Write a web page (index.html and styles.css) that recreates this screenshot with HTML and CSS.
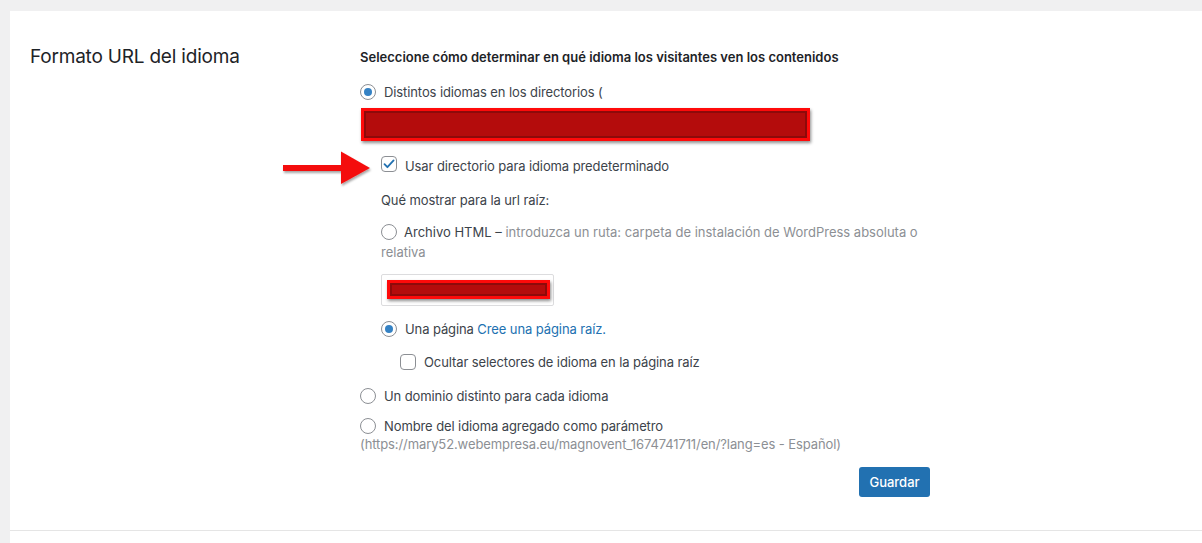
FILE: index.html
```html
<!DOCTYPE html>
<html lang="es">
<head>
    <meta charset="UTF-8">
    <meta name="viewport" content="width=device-width, initial-scale=1.0">
    <title>Formato URL del idioma</title>
    <link rel="stylesheet" href="styles.css">
</head>
<body>
    <div class="card">
        <div class="card-row">
            <h2 class="card-title">Formato URL del idioma</h2>

            <div class="settings">
                <p class="settings-heading">Seleccione cómo determinar en qué idioma los visitantes ven los contenidos</p>

                <label class="option">
                    <span class="radio checked"></span>
                    Distintos idiomas en los directorios (
                </label>
                <div class="redacted redacted-wide"></div>

                <div class="sub-options">
                    <label class="option option-check">
                        <span class="check checked">
                            <svg width="12" height="10" viewBox="0 0 12 10"><path d="M1.5 5.2 L4.4 8.2 L10.6 1.4" fill="none" stroke="#2271b1" stroke-width="1.8" stroke-linecap="round" stroke-linejoin="round"/></svg>
                        </span>
                        Usar directorio para idioma predeterminado
                    </label>

                    <!-- flecha de anotación -->
                    <svg class="arrow" width="94" height="38" viewBox="0 0 94 38">
                        <defs>
                            <filter id="sombra" x="-10%" y="-20%" width="130%" height="150%">
                                <feDropShadow dx="1" dy="2" stdDeviation="1.2" flood-color="#000" flood-opacity="0.35"/>
                            </filter>
                        </defs>
                        <path d="M2 15 H60 V1.5 L89 18 L60 34 V21 H2 Z" fill="#f40f0f" filter="url(#sombra)"/>
                    </svg>

                    <p class="sub-label">Qué mostrar para la url raíz:</p>

                    <p class="option-text"><span class="radio"></span><span class="dark">Archivo HTML –&nbsp;</span><span class="muted">introduzca un ruta: carpeta de instalación de WordPress absoluta o</span><br><span class="muted">relativa</span></p>

                    <div class="path-input">
                        <div class="redacted redacted-small"></div>
                    </div>

                    <label class="option option-page">
                        <span class="radio checked"></span>
                        Una página <a href="#" class="link">Cree una página raíz.</a>
                    </label>

                    <label class="option option-nested">
                        <span class="check"></span>
                        Ocultar selectores de idioma en la página raíz
                    </label>
                </div>

                <label class="option option-domain">
                    <span class="radio"></span>
                    Un dominio distinto para cada idioma
                </label>

                <label class="option option-param">
                    <span class="radio"></span>
                    Nombre del idioma agregado como parámetro
                </label>
                <p class="hint">(https://mary52.webempresa.eu/magnovent_1674741711/en/?lang=es - Español)</p>

                <div class="actions">
                    <button type="button" class="button-primary">Guardar</button>
                </div>
            </div>
        </div>
    </div>
</body>
</html>
```

FILE: styles.css
```css
* {
    margin: 0;
    padding: 0;
    box-sizing: border-box;
}

html,
body {
    height: 100%;
    overflow: hidden;
}

body {
    background-color: #f0f0f1;
    font-family: Inter, "Open Sans", sans-serif;
    font-size: 13px;
    color: #3c434a;
    line-height: 20px;
    letter-spacing: -0.1px;
    padding: 11px 0 0 10px;
}

.card {
    background: #fff;
    height: 100%;
}

.card-row {
    display: grid;
    grid-template-columns: 330px 570px;
    padding: 0 0 32px 20px;
    height: 520px;
    border-bottom: 1px solid #e5e5e5;
}

.card-title {
    font-size: 19px;
    font-weight: 400;
    color: #1d2327;
    line-height: 26px;
    padding-top: 33px;
    letter-spacing: -0.2px;
}

.settings {
    padding-top: 36px;
}

.settings-heading {
    font-weight: 600;
    color: #1d2327;
    letter-spacing: 0;
    margin-bottom: 15px;
}

/* Opciones */
.option,
.option-text {
    display: block;
    position: relative;
    padding-left: 24px;
}

.option-text {
    padding-left: 0;
    letter-spacing: 0;
}

.option-text .radio {
    display: inline-block;
    vertical-align: -3px;
    margin-right: 7px;
}

.dark {
    color: #3c434a;
}

.muted {
    color: #8c8f94;
}

.radio,
.check {
    width: 16px;
    height: 16px;
    border: 1px solid #8c8f94;
    background: #fff;
    display: inline-block;
}

.option > .radio,
.option > .check {
    position: absolute;
    left: 0;
    top: 2px;
}

.radio {
    border-radius: 50%;
}

.radio.checked::after {
    content: "";
    display: block;
    width: 8px;
    height: 8px;
    border-radius: 50%;
    background: #3582c4;
    margin: 3px;
}

.check {
    border-radius: 4px;
}

.check svg {
    display: block;
    margin: 2px 0 0 1px;
}

/* Bloques tachados */
.redacted {
    background: #b40c0c;
    border: 3px solid #ff0a0a;
    box-shadow: inset 0 0 0 2px #8e0a0a, 1px 2px 3px rgba(0, 0, 0, 0.45);
}

.redacted-wide {
    width: 449px;
    height: 33px;
    margin: 6px 0 0 1px;
}

.redacted-small {
    width: 163px;
    height: 19px;
}

.sub-options {
    position: relative;
    padding-left: 21px;
    margin-top: 15px;
}

.option-check > .check {
    top: 0;
}

.arrow {
    position: absolute;
    left: -79px;
    top: -6px;
}

.sub-label {
    margin-top: 14px;
}

.sub-options .option-text {
    margin-top: 12px;
}

.path-input {
    width: 173px;
    height: 32px;
    border: 1px solid #dcdcde;
    border-radius: 2px;
    padding: 5px 3px 0 5px;
    margin-top: 12px;
}

.option-page {
    margin-top: 13px;
}

.link {
    color: #2271b1;
    text-decoration: none;
}

.option-nested {
    margin: 13px 0 0 19px;
}

.option-domain {
    margin-top: 14px;
}

.option-param {
    margin-top: 10px;
}

.hint {
    color: #8c8f94;
    line-height: 16px;
}

.actions {
    display: flex;
    justify-content: flex-end;
    margin-top: 15px;
}

.button-primary {
    background: #2271b1;
    color: #fff;
    border: none;
    border-radius: 3px;
    font-family: inherit;
    font-size: 13px;
    font-weight: 500;
    letter-spacing: 0;
    width: 71px;
    height: 30px;
}
```
